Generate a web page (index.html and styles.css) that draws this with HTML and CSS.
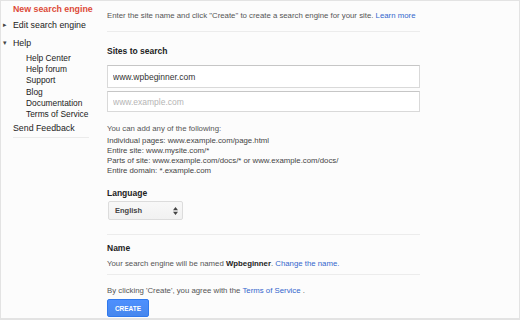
FILE: index.html
```html
<!DOCTYPE html>
<html lang="en">
<head>
  <meta charset="UTF-8">
  <title>New search engine</title>
  <link rel="stylesheet" href="styles.css">
</head>
<body>
  <div class="page">
    <div class="sidebar">
      <a class="nav-item active">New search engine</a>
      <a class="nav-item"><span class="arrow">&#9656;</span>Edit search engine</a>
      <a class="nav-item open"><span class="arrow">&#9662;</span>Help</a>
      <div class="sub-nav">
        <a>Help Center</a>
        <a>Help forum</a>
        <a>Support</a>
        <a>Blog</a>
        <a>Documentation</a>
        <a>Terms of Service</a>
      </div>
      <a class="nav-item feedback">Send Feedback</a>
    </div>

    <div class="main">
      <p class="intro">Enter the site name and click "Create" to create a search engine for your site. <a class="link">Learn more</a></p>

      <div class="section">
        <h3>Sites to search</h3>
        <input class="site-input" type="text" value="www.wpbeginner.com">
        <input class="site-input" type="text" placeholder="www.example.com">
        <p class="hint">You can add any of the following:</p>
        <div class="examples">
          <div>Individual pages: www.example.com/page.html</div>
          <div>Entire site: www.mysite.com/*</div>
          <div>Parts of site: www.example.com/docs/* or www.example.com/docs/</div>
          <div>Entire domain: *.example.com</div>
        </div>
        <h3 class="lang-title">Language</h3>
        <div class="select">
          <span>English</span>
          <svg class="updown" width="5" height="8" viewBox="0 0 5 8">
            <path d="M0 3.2 L2.5 0 L5 3.2 Z M0 4.8 L2.5 8 L5 4.8 Z" fill="#444"/>
          </svg>
        </div>
      </div>

      <div class="section name-section">
        <h3>Name</h3>
        <p>Your search engine will be named <b>Wpbeginner</b>. <a class="link">Change the name.</a></p>
      </div>

      <div class="section create-section">
        <p>By clicking 'Create', you agree with the <a class="link">Terms of Service</a> .</p>
        <button class="create-btn">CREATE</button>
      </div>
    </div>
  </div>
</body>
</html>
```

FILE: styles.css
```css
body {
  margin: 0;
  font-family: "Liberation Sans", Arial, sans-serif;
  color: #555;
  background: #fff;
}

.page {
  display: flex;
  width: 520px;
  height: 320px;
  box-sizing: border-box;
  border: 1px solid #e3e3e3;
  border-bottom-width: 2px;
  background: #fcfcfc;
}

.sidebar {
  width: 106px;
  flex-shrink: 0;
  display: flex;
  flex-direction: column;
  padding-top: 1px;
}

.nav-item {
  display: flex;
  align-items: center;
  height: 18px;
  padding-left: 12px;
  font-size: 8.8px;
  color: #222;
  position: relative;
}

.nav-item.active {
  color: #dd4b39;
  font-weight: bold;
  font-size: 8.8px;
  height: 13px;
  margin-bottom: 1px;
}

.arrow {
  position: absolute;
  left: 2px;
  font-size: 7px;
  color: #444;
}

.sub-nav {
  display: flex;
  flex-direction: column;
  padding-left: 25px;
  padding-top: 1px;
}

.sub-nav a {
  font-size: 8.4px;
  line-height: 11.2px;
  color: #222;
}

.nav-item.feedback {
  margin-top: 0;
  height: 16px;
  width: 76px;
  border-bottom: 1px solid #ebebeb;
  padding-bottom: 1px;
  margin-left: 12px;
  padding-left: 0;
}

.main {
  width: 313px;
  display: flex;
  flex-direction: column;
  font-size: 7.8px;
}

.main p {
  margin: 0;
}

.link {
  color: #3366cc;
}

.intro {
  line-height: 12px;
  padding: 9px 0 9px;
  border-bottom: 1px solid #ececec;
}

.section h3 {
  margin: 0;
  font-size: 8.5px;
  line-height: 12px;
  color: #222;
}

.section:first-of-type {
  padding-top: 13px;
}

.site-input {
  display: block;
  box-sizing: border-box;
  width: 313px;
  height: 23px;
  margin: 0;
  padding: 0 5px;
  border: 1px solid #d9d9d9;
  border-top-color: #c6c6c6;
  background: #fff;
  font-family: "Liberation Sans", Arial, sans-serif;
  font-size: 8.5px;
  color: #333;
  outline: none;
}

.site-input:first-of-type {
  margin-top: 8px;
}

.site-input + .site-input {
  margin-top: 3px;
  height: 21px;
}

.site-input::placeholder {
  color: #b5b5b5;
}

.hint {
  margin-top: 11px !important;
  line-height: 12px;
}

.examples {
  margin-top: 1px;
  line-height: 10px;
  color: #444;
}

.lang-title {
  margin-top: 11px !important;
}

.select {
  display: flex;
  justify-content: space-between;
  align-items: center;
  box-sizing: border-box;
  width: 75px;
  height: 19px;
  margin: 2px 0 0 1px;
  padding: 0 4px 0 6px;
  border: 1px solid #dcdcdc;
  border-radius: 2px;
  background: linear-gradient(to bottom, #f8f8f8, #f1f1f1);
  font-size: 7.5px;
  font-weight: bold;
  color: #444;
}

.name-section {
  margin-top: 14px;
  padding-top: 7px;
  padding-bottom: 4px;
  border-top: 1px solid #ececec;
}

.name-section p {
  margin-top: 4px;
  line-height: 12px;
}

.name-section b {
  color: #222;
}

.create-section {
  border-top: 1px solid #ececec;
  padding-top: 10px;
}

.create-section p {
  line-height: 12px;
}

.create-btn {
  display: block;
  margin-top: 2px;
  width: 42px;
  height: 18px;
  padding: 0;
  border: 1px solid #3079ed;
  border-radius: 2px;
  background: linear-gradient(to bottom, #4d90fe, #4787ed);
  color: #fff;
  font-family: "Liberation Sans", Arial, sans-serif;
  font-size: 6.5px;
  font-weight: bold;
  cursor: pointer;
}
```
